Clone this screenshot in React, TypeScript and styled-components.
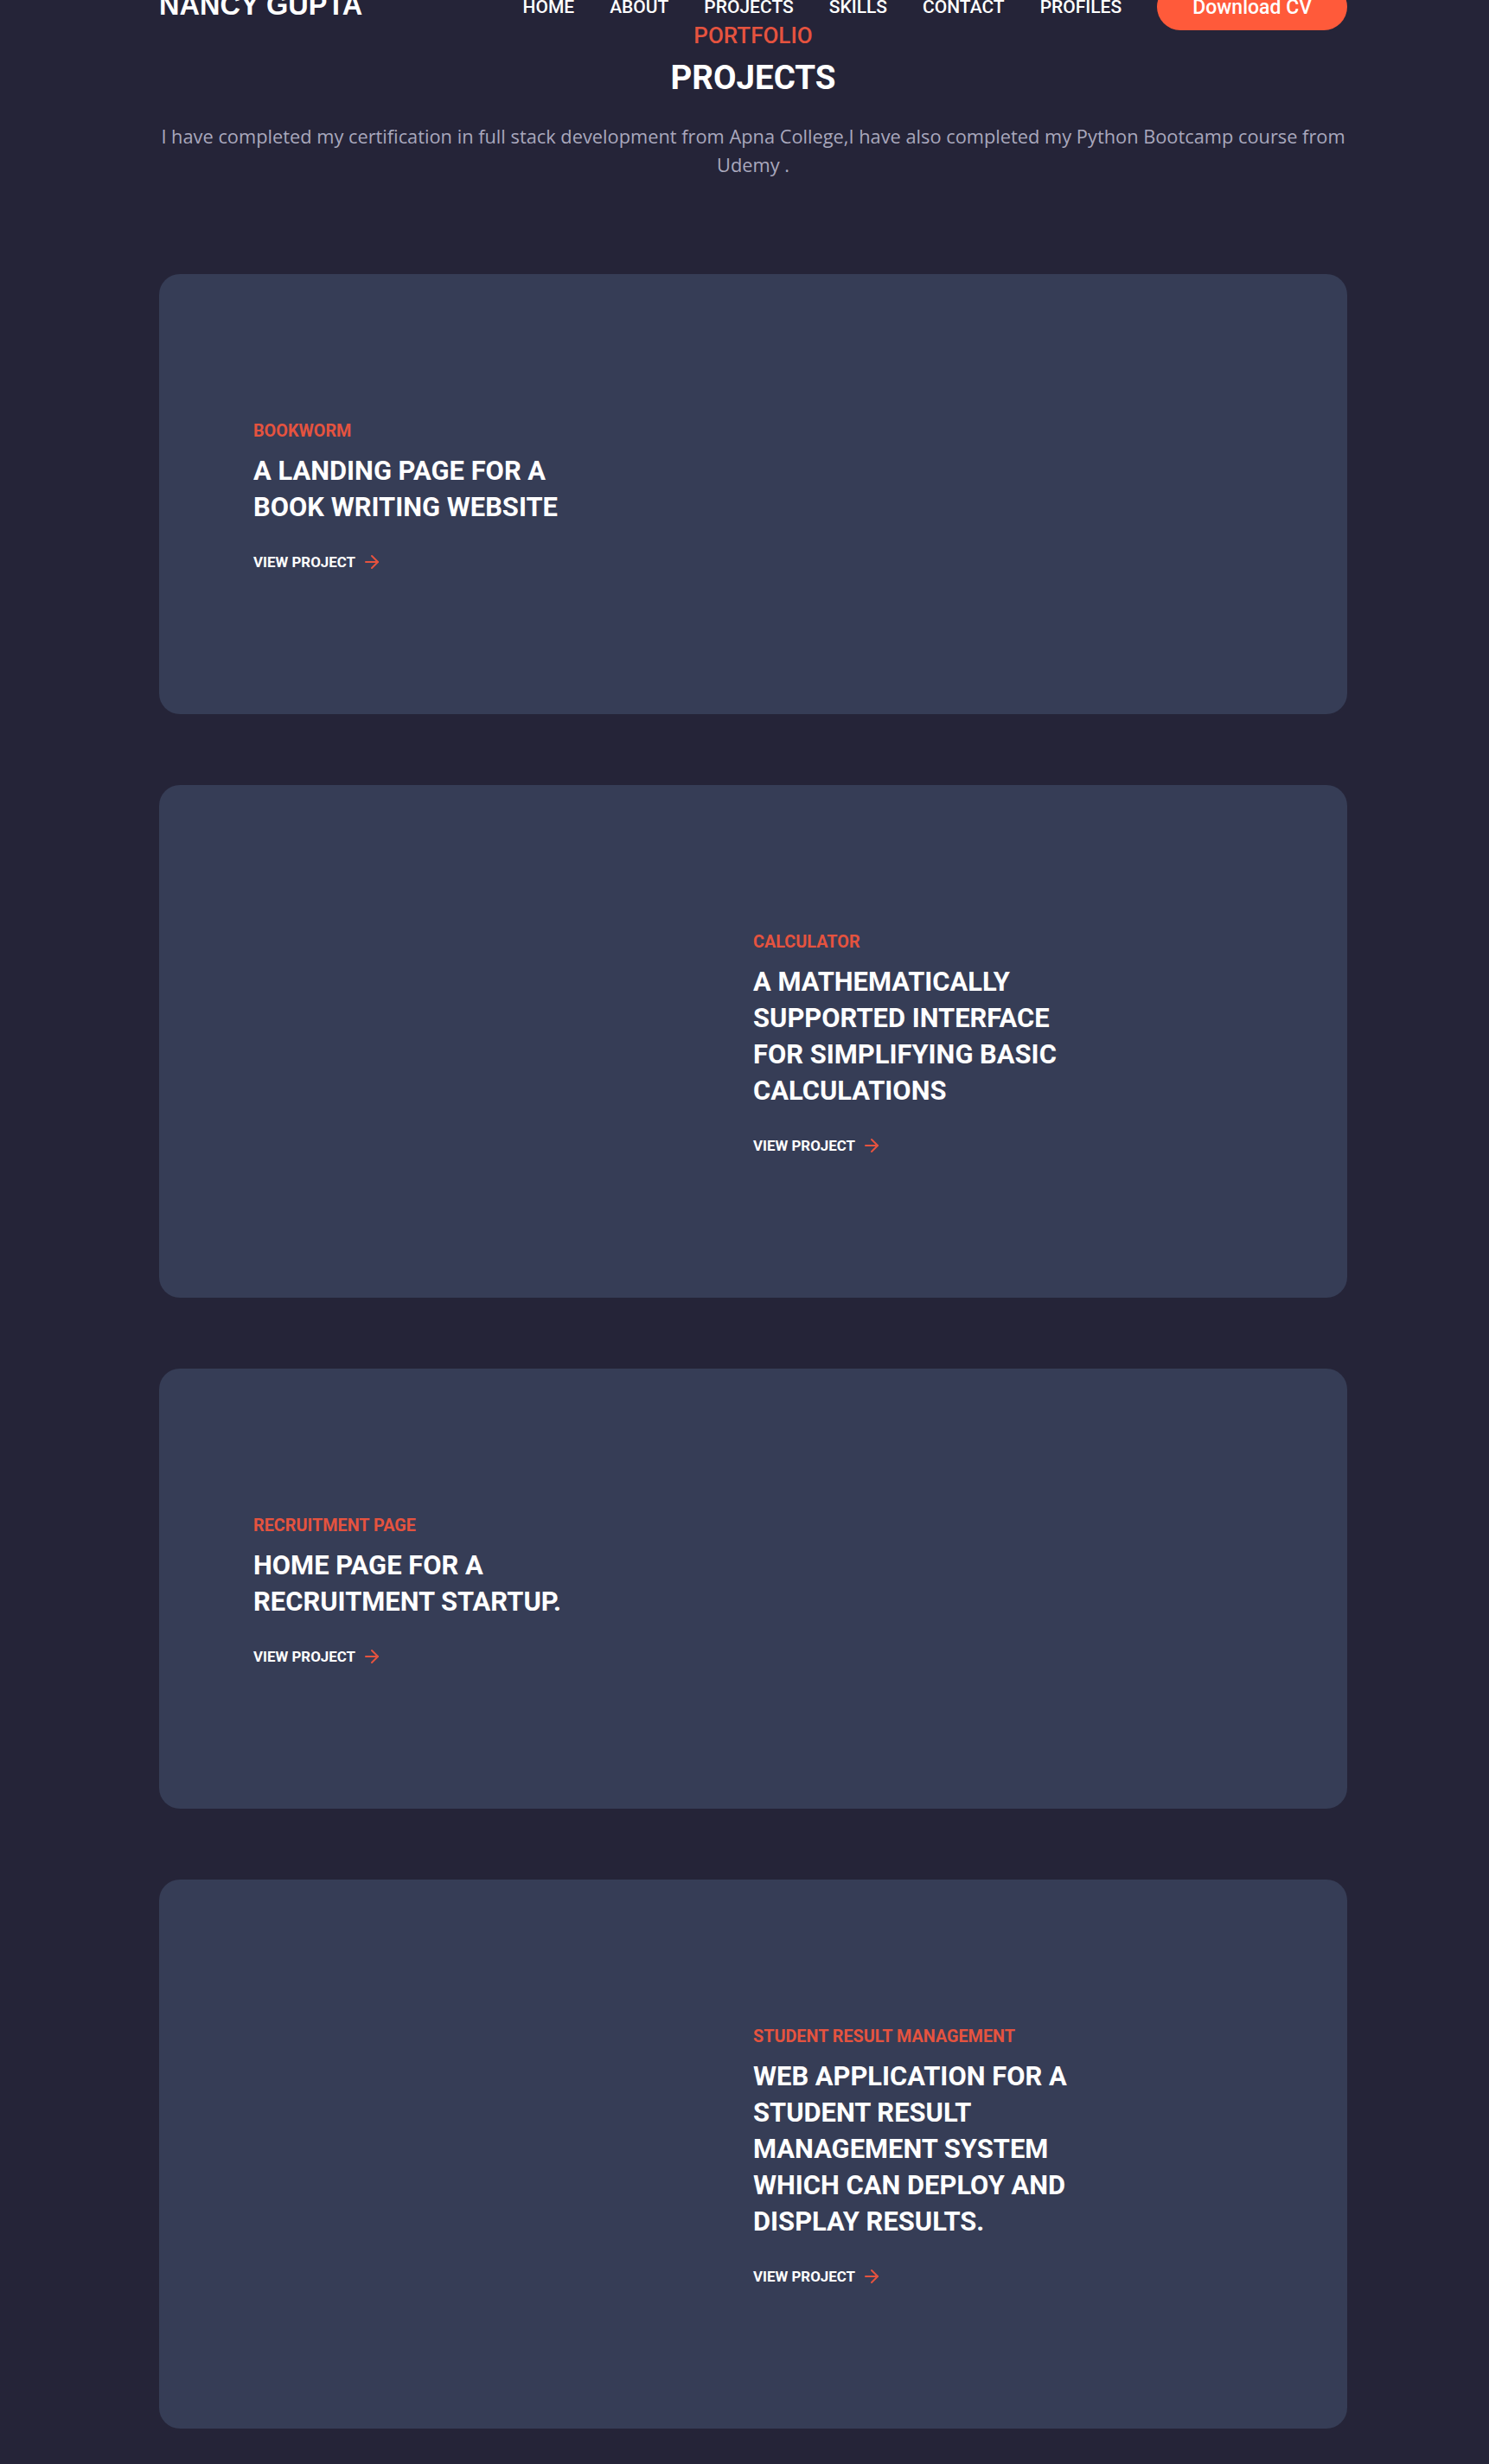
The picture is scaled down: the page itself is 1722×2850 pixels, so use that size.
import React from 'react';
import styled, { createGlobalStyle } from 'styled-components';
import { ArrowRight } from 'lucide-react';

const GlobalStyle = createGlobalStyle`
  html, body {
    margin: 0;
    padding: 0;
    background: #252438;
  }
  body {
    font-family: Roboto, "Noto Sans", sans-serif;
    color: #ffffff;
  }
  * {
    box-sizing: border-box;
  }
`;

type Project = {
  tag: string;
  title: string;
};

const PROJECTS: Project[] = [
  { tag: 'Bookworm', title: 'A landing page for a book writing website' },
  {
    tag: 'Calculator',
    title: 'A mathematically supported interface for simplifying basic calculations',
  },
  { tag: 'Recruitment page', title: 'Home page for a recruitment startup.' },
  {
    tag: 'Student Result Management',
    title:
      'Web application for a student result management system which can deploy and display results.',
  },
];

const NAV_LINKS = ['Home', 'About', 'Projects', 'Skills', 'Contact', 'Profiles'];

const Page = styled.div`
  padding: 0 164px 39px 184px;
`;

const Header = styled.header`
  display: flex;
  align-items: center;
  justify-content: space-between;
  height: 54px;
  margin: -19px 0 -8px;
`;

const Brand = styled.div`
  font-family: "Liberation Sans", Arial, sans-serif;
  font-weight: 700;
  font-size: 32.5px;
  margin-top: -3px;
`;

const NavRight = styled.nav`
  display: flex;
  align-items: center;
  gap: 41px;
`;

const NavLink = styled.a`
  font-size: 21px;
  line-height: 24px;
  font-weight: 500;
  text-transform: uppercase;
  color: #ffffff;
  text-decoration: none;
`;

const CvButton = styled.a`
  display: inline-flex;
  align-items: center;
  height: 54px;
  padding: 0 41px;
  border-radius: 27px;
  background: #ff5a3a;
  color: #ffffff;
  font-size: 23px;
  font-weight: 500;
  text-decoration: none;
`;

const Intro = styled.section`
  display: flex;
  flex-direction: column;
  align-items: center;
  text-align: center;
`;

const Eyebrow = styled.div`
  font-size: 26px;
  line-height: 28px;
  font-weight: 500;
  color: #e5533f;
  text-transform: uppercase;
`;

const Heading = styled.h2`
  margin: 13px 0 0;
  font-size: 38.5px;
  line-height: 44px;
  font-weight: 700;
  text-transform: uppercase;
`;

const Lead = styled.p`
  margin: 29px 0 0;
  font-family: "Open Sans", sans-serif;
  font-size: 21.8px;
  line-height: 33px;
  color: #a9a8bd;
`;

const CardList = styled.div`
  display: flex;
  flex-direction: column;
  gap: 82px;
  margin-top: 110px;
`;

const Card = styled.article`
  display: grid;
  grid-template-columns: 1fr 1fr;
  align-items: center;
  padding: 170px 109px 164px;
  border-radius: 24px;
  background: #363d56;
`;

const Shot = styled.div<{ $flip: boolean }>`
  grid-row: 1;
  grid-column: ${(p) => (p.$flip ? 1 : 2)};
`;

const Info = styled.div<{ $flip: boolean }>`
  grid-row: 1;
  grid-column: ${(p) => (p.$flip ? 2 : 1)};
  max-width: 380px;
`;

const Tag = styled.div`
  font-size: 19.8px;
  line-height: 24px;
  font-weight: 700;
  color: #e5533f;
  text-transform: uppercase;
`;

const Title = styled.h3`
  margin: 13px 0 0;
  font-size: 30.9px;
  line-height: 42px;
  font-weight: 700;
  text-transform: uppercase;
`;

const ViewLink = styled.a`
  display: inline-flex;
  align-items: center;
  gap: 7px;
  margin-top: 30px;
  font-size: 16.9px;
  line-height: 20px;
  font-weight: 700;
  color: #ffffff;
  text-transform: uppercase;
  text-decoration: none;
  svg {
    color: #e5533f;
  }
`;

const ProjectCard = ({ project, index }: { project: Project; index: number }) => {
  const flip = index % 2 === 1;
  return (
    <Card>
      <Shot $flip={flip} />
      <Info $flip={flip}>
        <Tag>{project.tag}</Tag>
        <Title>{project.title}</Title>
        <ViewLink href="#">
          View Project <ArrowRight size={24} strokeWidth={2} />
        </ViewLink>
      </Info>
    </Card>
  );
};

export default function App() {
  return (
    <>
      <GlobalStyle />
      <Page>
        <Header>
          <Brand>NANCY GUPTA</Brand>
          <NavRight>
            {NAV_LINKS.map((link) => (
              <NavLink key={link} href="#">
                {link}
              </NavLink>
            ))}
            <CvButton href="#">Download CV</CvButton>
          </NavRight>
        </Header>
        <Intro>
          <Eyebrow>Portfolio</Eyebrow>
          <Heading>Projects</Heading>
          <Lead>
            I have completed my certification in full stack development from Apna College,I have
            also completed my Python Bootcamp course from Udemy .
          </Lead>
        </Intro>
        <CardList>
          {PROJECTS.map((project, i) => (
            <ProjectCard key={project.tag} project={project} index={i} />
          ))}
        </CardList>
      </Page>
    </>
  );
}
